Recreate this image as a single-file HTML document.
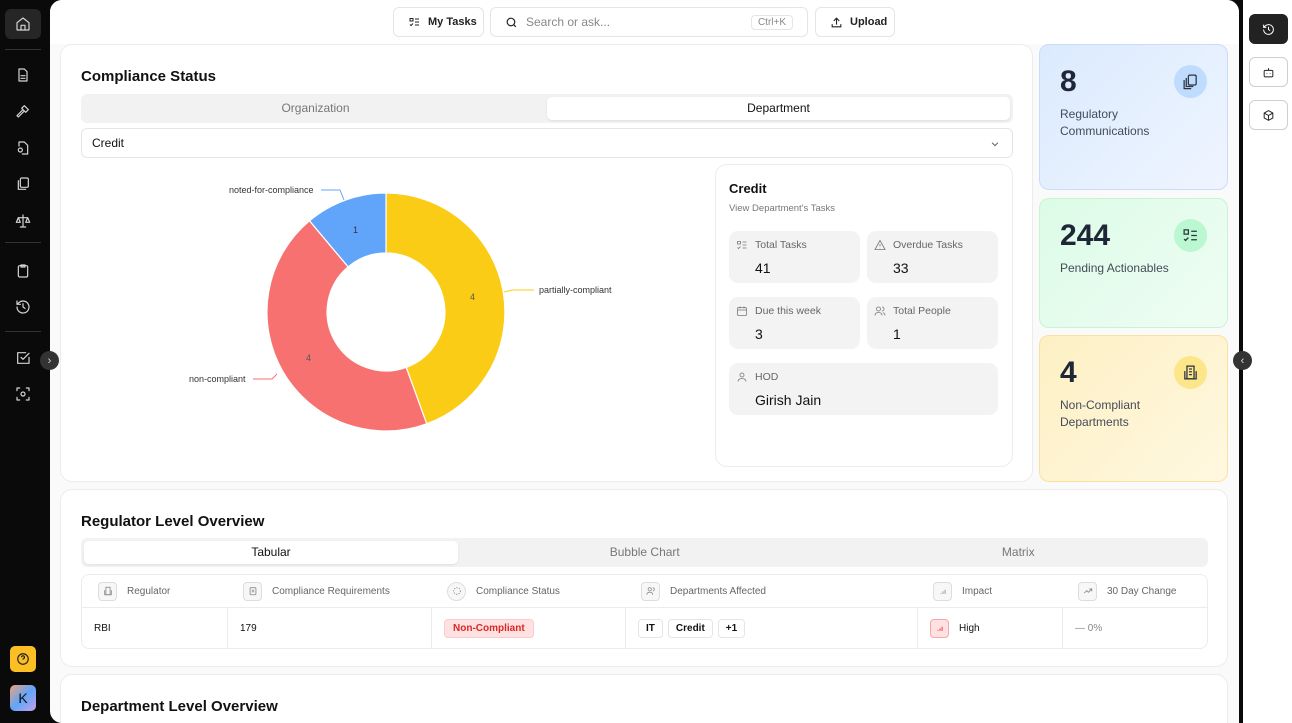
<!DOCTYPE html>
<html><head><meta charset="utf-8"><style>
*{box-sizing:border-box;margin:0;padding:0}
body{width:1292px;height:723px;overflow:hidden;background:#0a0a0a;font-family:"Liberation Sans",sans-serif;color:#111;position:relative}
.side{position:absolute;left:0;top:0;width:50px;height:723px;background:#0a0a0a}
.si{position:absolute;left:5px;width:36px;height:30px;display:flex;align-items:center;justify-content:center}
.si svg{width:16px;height:16px;stroke:#d4d4d4;fill:none;stroke-width:1.8;stroke-linecap:round;stroke-linejoin:round}
.main{position:absolute;left:50px;top:0;width:1189px;height:723px;background:#fafafa;border-radius:12px 12px 0 12px;overflow:hidden}
.right{position:absolute;left:1243px;top:0;width:49px;height:723px;background:#fff}
.card{position:absolute;background:#fff;border:1px solid #ececec;border-radius:12px}
.btn{position:absolute;top:7px;height:30px;background:#fff;border:1px solid #e5e5e5;border-radius:6px;font-size:11px;display:flex;align-items:center;font-weight:bold;color:#222}
h2{font-size:15px;font-weight:bold;position:absolute;color:#111}
.tabs{position:absolute;background:#f2f2f2;border-radius:6px;display:flex;padding:3px}
.tabs div{flex:1;text-align:center;font-size:12px;color:#777;line-height:23px;border-radius:5px}
.tabs .on{background:#fff;color:#111;box-shadow:0 1px 2px rgba(0,0,0,.08)}
.st{position:absolute;background:#f3f3f3;border-radius:9px;padding:8px 0 0 26px}
.st .l{font-size:10.5px;color:#666}
.st .v{font-size:14px;color:#111;margin-top:9px}
.st svg{position:absolute;left:7px;top:8px;width:12px;height:12px;fill:none;stroke:#777;stroke-width:1.6}
.kpi{position:absolute;left:989px;width:189px;border-radius:10px;padding:20px 20px}
.kpi .n{font-size:30px;font-weight:bold;color:#1e2637}
.kpi .t{font-size:12px;color:#444b5a;line-height:16.5px;margin-top:7px}
.kpi .ic{position:absolute;right:20px;top:20px;width:33px;height:33px;border-radius:50%;display:flex;align-items:center;justify-content:center}
.kpi .ic svg{width:17px;height:17px;fill:none;stroke:#2c3443;stroke-width:1.8}
.th{position:absolute;top:0;height:32px;display:flex;align-items:center;font-size:10px;color:#666}
.th i{display:inline-flex;align-items:center;justify-content:center;width:19px;height:19px;border:1px solid #ddd;border-radius:4px;background:#f7f7f7;margin-right:10px}
.th i svg{width:10px;height:10px;fill:none;stroke:#888;stroke-width:2}
.td{position:absolute;top:33px;height:40px;display:flex;align-items:center;font-size:10px;color:#111;border-left:1px solid #ececec;padding-left:12px}
.chip{border:1px solid #e5e5e5;border-radius:4px;padding:3px 7px;font-weight:bold;margin-right:5px}
.rb{position:absolute;left:6px;width:39px;height:30px;border:1px solid #cfcfcf;border-radius:6px;display:flex;align-items:center;justify-content:center;background:#fff}
.rb svg{width:13px;height:13px;fill:none;stroke:#222;stroke-width:1.8}
</style></head><body>
<div class="side">
 <div class="si" style="top:9px;background:#262626;border-radius:6px"><svg viewBox="0 0 24 24"><path d="M3 10l9-7 9 7v10a1 1 0 0 1-1 1H4a1 1 0 0 1-1-1z"/><path d="M9 21v-7h6v7"/></svg></div>
 <div style="position:absolute;left:5px;top:49px;width:36px;height:1px;background:#333"></div>
 <div class="si" style="top:60px"><svg viewBox="0 0 24 24"><path d="M14 3H6v18h12V7z"/><path d="M9 13h6M9 17h6"/></svg></div>
 <div class="si" style="top:96px"><svg viewBox="0 0 24 24"><path d="M14 4l6 6-4 4-6-6zM11 11l-8 8 2 2 8-8"/></svg></div>
 <div class="si" style="top:133px"><svg viewBox="0 0 24 24"><path d="M6 9V3h8l5 5v13h-8M5 15a3 3 0 1 0 6 0 3 3 0 0 0-6 0"/></svg></div>
 <div class="si" style="top:169px"><svg viewBox="0 0 24 24"><rect x="8" y="3" width="12" height="14" rx="2"/><path d="M5 7v13h11"/></svg></div>
 <div class="si" style="top:206px"><svg viewBox="0 0 24 24"><path d="M12 3v18M5 7h14M5 7l-3 7h6zM19 7l-3 7h6zM8 21h8"/></svg></div>
 <div style="position:absolute;left:5px;top:242px;width:36px;height:1px;background:#333"></div>
 <div class="si" style="top:256px"><svg viewBox="0 0 24 24"><rect x="5" y="4" width="14" height="17" rx="2"/><path d="M9 3h6v3H9z"/></svg></div>
 <div class="si" style="top:292px"><svg viewBox="0 0 24 24"><path d="M3 12a9 9 0 1 0 3-6.7L3 8M3 3v5h5M12 7v5l3 2"/></svg></div>
 <div style="position:absolute;left:5px;top:331px;width:36px;height:1px;background:#333"></div>
 <div class="si" style="top:343px"><svg viewBox="0 0 24 24"><path d="M21 11v9H4V4h12M9 11l3 3 9-9"/></svg></div>
 <div class="si" style="top:379px"><svg viewBox="0 0 24 24"><path d="M3 7V3h4M17 3h4v4M21 17v4h-4M7 21H3v-4"/><circle cx="12" cy="12" r="3"/></svg></div>
 <div style="position:absolute;left:10px;top:646px;width:26px;height:26px;border-radius:5px;background:#fbbf24;display:flex;align-items:center;justify-content:center"><svg width="14" height="14" viewBox="0 0 24 24" fill="none" stroke="#222" stroke-width="2"><circle cx="12" cy="12" r="9"/><path d="M9.5 9a2.5 2.5 0 1 1 3 2.5c-.5.2-.5.8-.5 1.5M12 17h.01"/></svg></div>
 <div style="position:absolute;left:10px;top:685px;width:26px;height:26px;border-radius:5px;background:linear-gradient(135deg,#f0a27a,#60a5fa 50%,#c4a4e6);display:flex;align-items:center;justify-content:center;font-size:14px;color:#111">K</div>
</div>
<div style="position:absolute;left:40px;top:351px;width:19px;height:19px;border-radius:50%;background:#333;color:#ddd;font-size:11px;display:flex;align-items:center;justify-content:center;z-index:5">›</div>

<div class="main">
 <div style="position:absolute;left:0;top:0;width:1189px;height:44px;background:#fff"></div>
 <div class="btn" style="left:343px;width:91px;padding-left:14px"><svg width="13" height="12" viewBox="0 0 24 24" fill="none" stroke="#222" stroke-width="2"><path d="M3 5h6v5H3zM13 6h8M13 12h8M3 17l2 2 4-4M13 18h8"/></svg><span style="margin-left:7px">My Tasks</span></div>
 <div class="btn" style="left:440px;width:318px;padding-left:14px;font-weight:normal;color:#888;font-size:12px"><svg width="13" height="13" viewBox="0 0 24 24" fill="none" stroke="#222" stroke-width="2.2"><circle cx="11" cy="11" r="7"/><path d="M20 20l-4-4"/></svg><span style="margin-left:8px">Search or ask...</span><span style="position:absolute;right:14px;border:1px solid #e5e5e5;border-radius:4px;padding:1px 6px;font-size:10px;color:#888">Ctrl+K</span></div>
 <div class="btn" style="left:765px;width:80px;padding-left:14px"><svg width="13" height="13" viewBox="0 0 24 24" fill="none" stroke="#222" stroke-width="2"><path d="M4 15v5h16v-5M12 4v12M7 9l5-5 5 5"/></svg><span style="margin-left:7px">Upload</span></div>

 <div class="card" style="left:10px;top:44px;width:973px;height:438px">
  <h2 style="left:20px;top:23px">Compliance Status</h2>
  <div class="tabs" style="left:20px;top:49px;width:932px;height:29px"><div>Organization</div><div class="on">Department</div></div>
  <div style="position:absolute;left:20px;top:83px;width:932px;height:30px;border:1px solid #e5e5e5;border-radius:6px;font-size:12px;padding:7px 10px">Credit<svg style="position:absolute;right:12px;top:10px" width="10" height="10" viewBox="0 0 24 24" fill="none" stroke="#666" stroke-width="2.5"><path d="M5 9l7 7 7-7"/></svg></div>
  <svg style="position:absolute;left:-60px;top:-44px" width="700" height="480" font-family="Liberation Sans" font-size="9">
   <path d="M385,192 A119,119 0 0 1 425.7,422.8 L405.2,366.4 A59,59 0 0 0 385,252 Z" fill="#facc15" stroke="#fff" stroke-width="1.2"/>
   <path d="M425.7,422.8 A119,119 0 0 1 308.5,219.8 L347.1,265.8 A59,59 0 0 0 405.2,366.4 Z" fill="#f87171" stroke="#fff" stroke-width="1.2"/>
   <path d="M308.5,219.8 A119,119 0 0 1 385,192 L385,252 A59,59 0 0 0 347.1,265.8 Z" fill="#60a5fa" stroke="#fff" stroke-width="1.2"/>
   <text x="469" y="299" fill="#555">4</text><text x="305" y="360" fill="#555">4</text><text x="352" y="232" fill="#333">1</text>
   <path d="M320,189 H339 L343,199" fill="none" stroke="#60a5fa"/>
   <path d="M503,291 L512,289 H533" fill="none" stroke="#facc15"/>
   <path d="M252,378 H271 L276,373" fill="none" stroke="#f87171"/>
   <text x="228" y="192" fill="#333">noted-for-compliance</text>
   <text x="538" y="292" fill="#333">partially-compliant</text>
   <text x="188" y="381" fill="#333">non-compliant</text>
  </svg>
  <div class="card" style="left:654px;top:119px;width:298px;height:303px">
   <div style="position:absolute;left:13px;top:16px;font-size:13px;font-weight:bold">Credit</div>
   <div style="position:absolute;left:13px;top:38px;font-size:9.5px;color:#777">View Department's Tasks</div>
   <div class="st" style="left:13px;top:66px;width:131px;height:52px"><svg viewBox="0 0 24 24"><path d="M3 5h6v5H3zM13 6h8M13 12h8M3 17l2 2 4-4M13 18h8"/></svg><div class="l">Total Tasks</div><div class="v">41</div></div>
   <div class="st" style="left:151px;top:66px;width:131px;height:52px"><svg viewBox="0 0 24 24"><path d="M12 3L2 21h20zM12 10v5M12 18v.5"/></svg><div class="l">Overdue Tasks</div><div class="v">33</div></div>
   <div class="st" style="left:13px;top:132px;width:131px;height:52px"><svg viewBox="0 0 24 24"><rect x="3" y="5" width="18" height="16" rx="2"/><path d="M3 10h18M8 3v4M16 3v4"/></svg><div class="l">Due this week</div><div class="v">3</div></div>
   <div class="st" style="left:151px;top:132px;width:131px;height:52px"><svg viewBox="0 0 24 24"><circle cx="9" cy="8" r="4"/><path d="M2 21c0-4 3-6 7-6s7 2 7 6M16 4a4 4 0 0 1 0 8M22 21c0-3-2-5-4-5.5"/></svg><div class="l">Total People</div><div class="v">1</div></div>
   <div class="st" style="left:13px;top:198px;width:269px;height:52px"><svg viewBox="0 0 24 24"><circle cx="12" cy="8" r="4"/><path d="M4 21c0-4 4-6 8-6s8 2 8 6"/></svg><div class="l">HOD</div><div class="v">Girish Jain</div></div>
  </div>
 </div>

 <div class="kpi" style="top:44px;height:146px;background:linear-gradient(135deg,#dbeafe,#eff5ff);border:1px solid #c9dcfb"><div class="n">8</div><div class="t">Regulatory<br>Communications</div><div class="ic" style="background:#bfdbfe"><svg viewBox="0 0 24 24"><rect x="9" y="3" width="11" height="14" rx="2"/><path d="M6 7v12h10M3 10v12h10"/></svg></div></div>
 <div class="kpi" style="top:198px;height:130px;background:linear-gradient(135deg,#dcfce7,#effdf3);border:1px solid #c8f3d5"><div class="n">244</div><div class="t">Pending Actionables</div><div class="ic" style="background:#bbf7d0"><svg viewBox="0 0 24 24"><path d="M3 4h6v6H3zM13 6h8M13 12h8M3 17l2 2 4-4M13 18h8"/></svg></div></div>
 <div class="kpi" style="top:335px;height:147px;background:linear-gradient(135deg,#fdf0c4,#fff8e0);border:1px solid #f7e3a0"><div class="n">4</div><div class="t">Non-Compliant<br>Departments</div><div class="ic" style="background:#fde68a"><svg viewBox="0 0 24 24"><rect x="7" y="3" width="10" height="18"/><path d="M4 10v11h16V10M10 7h4M10 11h4M10 15h4"/></svg></div></div>

 <div class="card" style="left:10px;top:489px;width:1168px;height:178px">
  <h2 style="left:20px;top:23px">Regulator Level Overview</h2>
  <div class="tabs" style="left:20px;top:48px;width:1127px;height:29px"><div class="on" style="flex:none;width:374px">Tabular</div><div>Bubble Chart</div><div>Matrix</div></div>
  <div style="position:absolute;left:20px;top:84px;width:1127px;height:75px;border:1px solid #ececec;border-radius:8px">
   <div style="position:absolute;left:0;top:32px;width:100%;height:1px;background:#ececec"></div>
   <div class="th" style="left:16px"><i><svg viewBox="0 0 24 24"><rect x="7" y="3" width="10" height="18"/><path d="M4 10v11h16V10"/></svg></i>Regulator</div>
   <div class="th" style="left:161px"><i><svg viewBox="0 0 24 24"><rect x="5" y="4" width="14" height="17" rx="2"/><path d="M9 10h6M9 14h6"/></svg></i>Compliance Requirements</div>
   <div class="th" style="left:365px"><i style="border-radius:50%"><svg viewBox="0 0 24 24"><circle cx="12" cy="12" r="8" stroke-dasharray="3 3"/></svg></i>Compliance Status</div>
   <div class="th" style="left:559px"><i><svg viewBox="0 0 24 24"><circle cx="9" cy="8" r="4"/><path d="M2 21c0-4 3-6 7-6s7 2 7 6M16 4a4 4 0 0 1 0 8"/></svg></i>Departments Affected</div>
   <div class="th" style="left:851px"><i><svg viewBox="0 0 24 24"><path d="M7 19v-2M12 19v-6M17 19v-10"/></svg></i>Impact</div>
   <div class="th" style="left:996px"><i><svg viewBox="0 0 24 24"><path d="M3 17l6-6 4 4 8-8M15 7h6v6"/></svg></i>30 Day Change</div>
   <div class="td" style="left:0;border:none">RBI</div>
   <div class="td" style="left:145px">179</div>
   <div class="td" style="left:349px"><span style="background:#fee2e2;border:1px solid #fecaca;color:#dc2626;border-radius:4px;padding:3px 8px;font-weight:bold">Non-Compliant</span></div>
   <div class="td" style="left:543px"><span class="chip">IT</span><span class="chip">Credit</span><span class="chip">+1</span></div>
   <div class="td" style="left:835px"><i style="display:inline-flex;align-items:center;justify-content:center;width:19px;height:19px;border:1px solid #fca5a5;border-radius:4px;background:#fee2e2;margin-right:10px"><svg width="10" height="10" viewBox="0 0 24 24" fill="none" stroke="#ef4444" stroke-width="2.5"><path d="M7 19v-2M12 19v-6M17 19v-10"/></svg></i>High</div>
   <div class="td" style="left:980px;color:#888">— 0%</div>
  </div>
 </div>
 <div class="card" style="left:10px;top:674px;width:1168px;height:80px"><h2 style="left:20px;top:23px">Department Level Overview</h2></div>
</div>
<div style="position:absolute;left:1233px;top:351px;width:19px;height:19px;border-radius:50%;background:#333;color:#ddd;font-size:11px;display:flex;align-items:center;justify-content:center;z-index:5">‹</div>
<div class="right">
 <div class="rb" style="top:14px;background:#222;border-color:#222"><svg viewBox="0 0 24 24" style="stroke:#fff"><path d="M3 12a9 9 0 1 0 3-6.7L3 8M3 3v5h5M12 7v5l3 2"/></svg></div>
 <div class="rb" style="top:57px"><svg viewBox="0 0 24 24"><rect x="4" y="8" width="16" height="12" rx="2"/><path d="M12 4v4M9 13v1M15 13v1"/></svg></div>
 <div class="rb" style="top:100px"><svg viewBox="0 0 24 24"><path d="M12 3l8 4.5v9L12 21l-8-4.5v-9zM4 7.5l8 4.5 8-4.5M12 12v9"/></svg></div>
</div>
</body></html>
